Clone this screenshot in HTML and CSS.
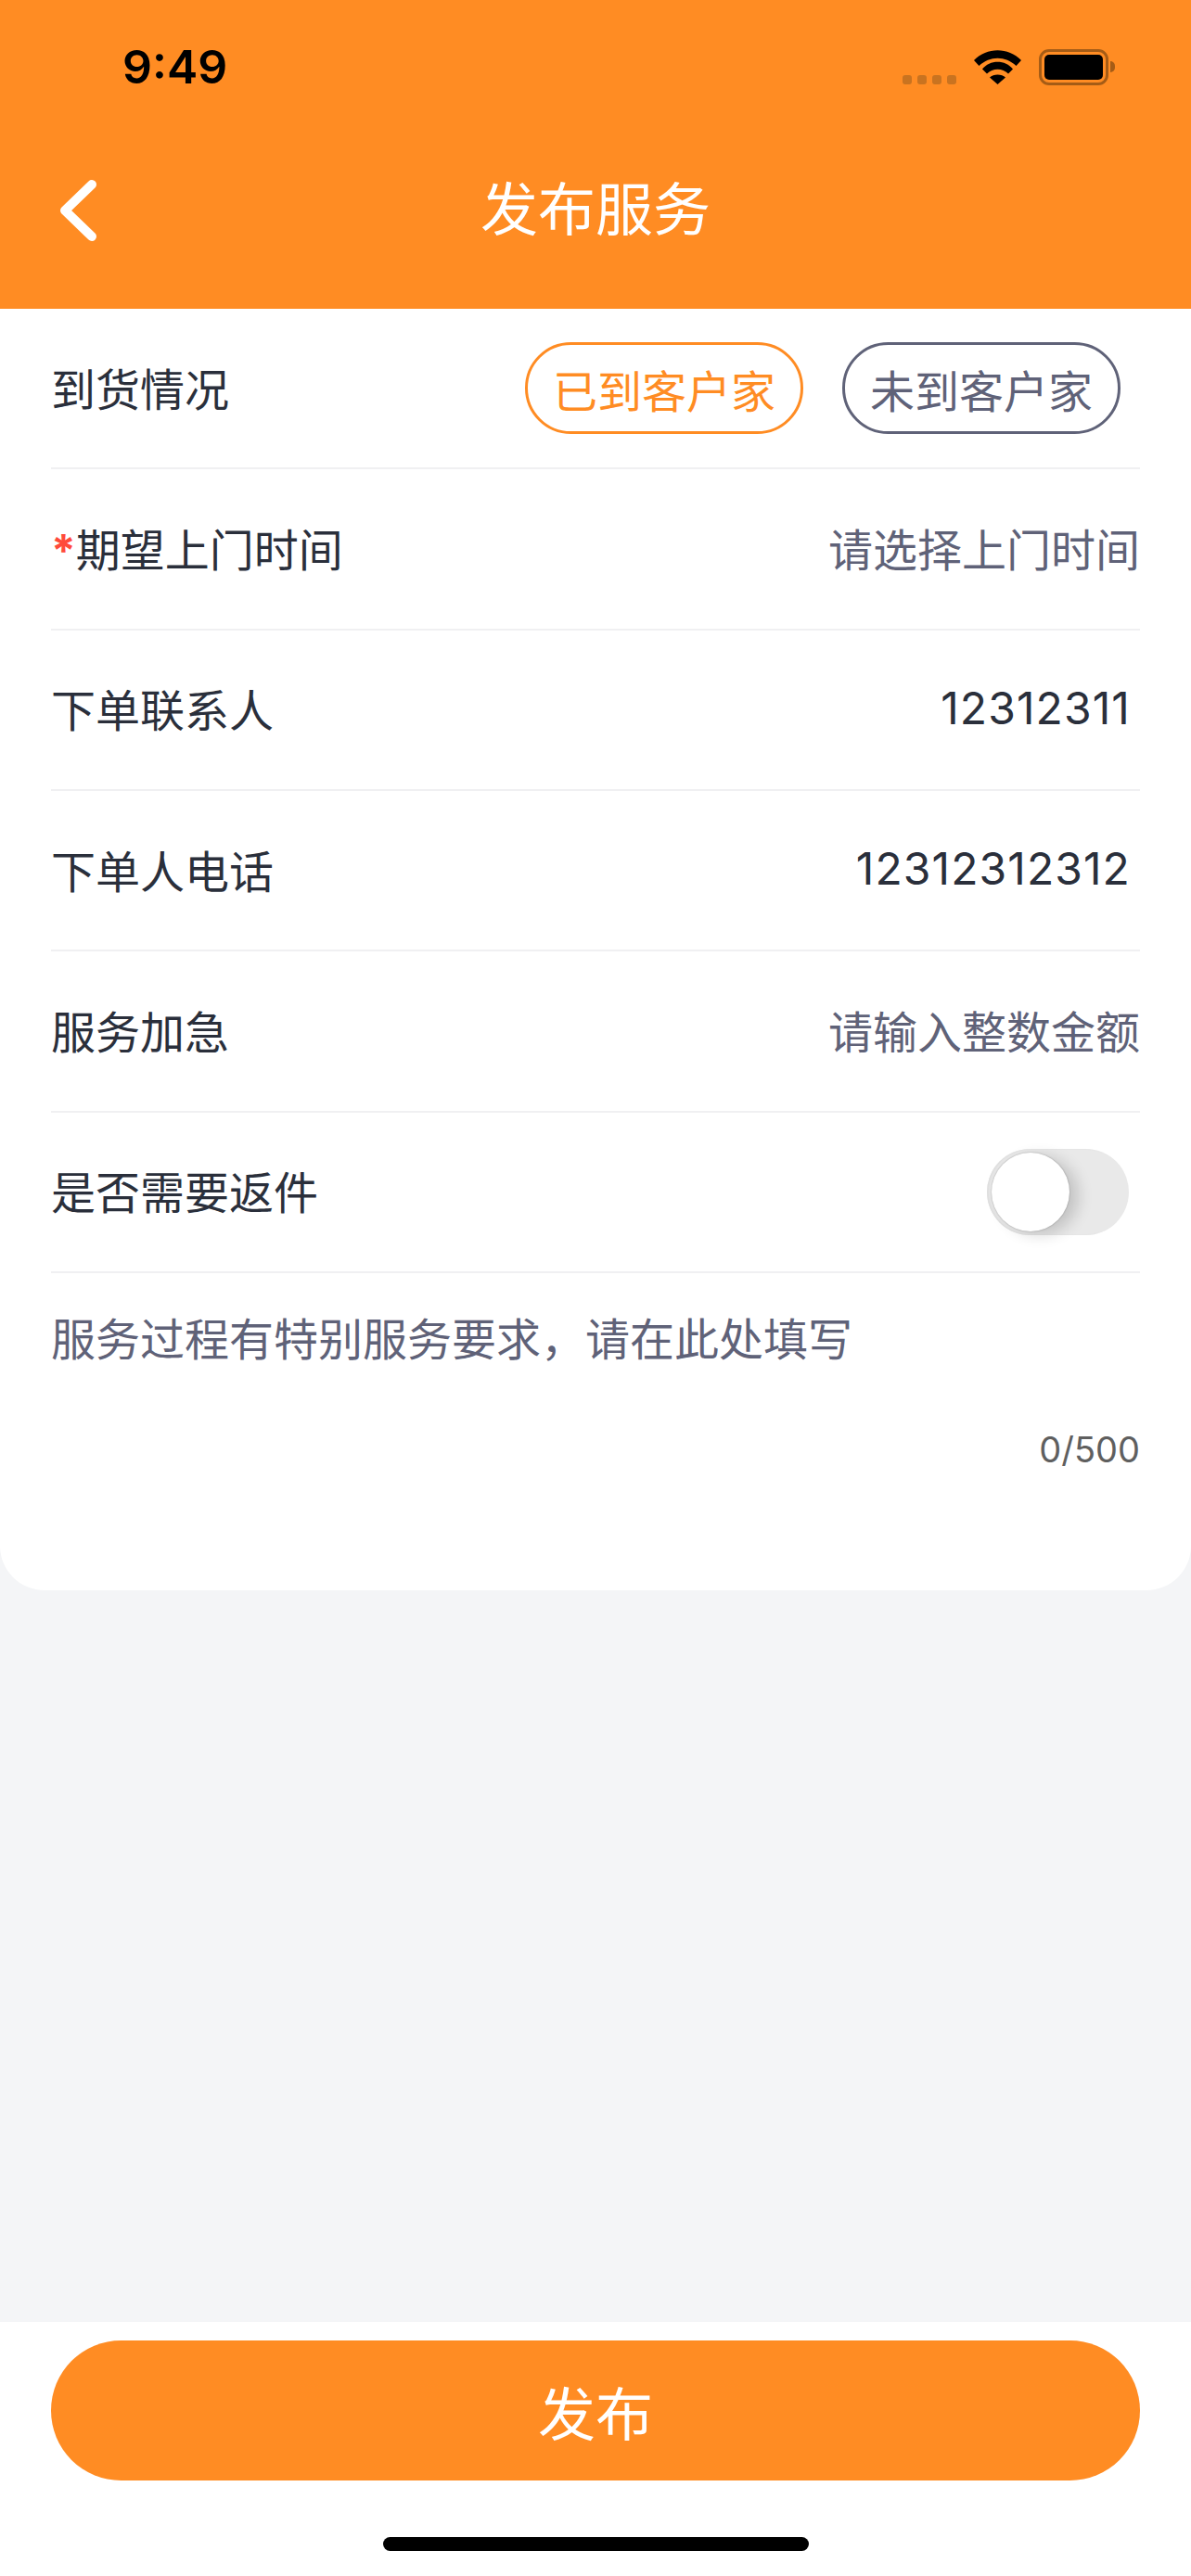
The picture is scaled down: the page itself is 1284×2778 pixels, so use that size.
FILE: index.html
```html
<!DOCTYPE html>
<html lang="zh-CN">
<head>
    <meta charset="UTF-8">
    <meta name="viewport" content="width=device-width, initial-scale=1.0">
    <title>发布服务</title>
    <link rel="stylesheet" href="styles.css">
</head>
<body>
    <div class="page">
        <header class="header">
            <div class="status-bar">
                <span class="time">9:49</span>
                <div class="status-icons">
                    <div class="signal"><i></i><i></i><i></i><i></i></div>
                    <svg class="wifi" width="51" height="37" viewBox="0 0 51 37">
                        <path d="M0 11 C14 -3.500 37 -3.500 51 11 L45.500 17 C34 6 17 6 5.500 17 Z"/>
                        <path d="M9 20.500 C17 10 34 10 42 20.500 L37 25.500 C31 19 20 19 14 25.500 Z"/>
                        <path d="M17 29.500 C21 25.500 30 25.500 34 29.500 L25.500 37 Z"/>
                    </svg>
                    <div class="battery"><div class="battery-fill"></div></div>
                    <div class="battery-cap"></div>
                </div>
            </div>
            <div class="nav-bar">
                <svg class="back" width="42" height="66" viewBox="0 0 42 66">
                    <path d="M34 5 L5 33 L34 61"/>
                </svg>
                <h1 class="title">发布服务</h1>
            </div>
        </header>

        <main class="card">
            <div class="row">
                <span class="label">到货情况</span>
                <div class="tags">
                    <span class="tag tag-active">已到客户家</span>
                    <span class="tag">未到客户家</span>
                </div>
            </div>
            <div class="row">
                <span class="label"><b class="required">*</b>期望上门时间</span>
                <span class="placeholder">请选择上门时间</span>
            </div>
            <div class="row">
                <span class="label">下单联系人</span>
                <span class="value">12312311</span>
            </div>
            <div class="row">
                <span class="label">下单人电话</span>
                <span class="value">12312312312</span>
            </div>
            <div class="row">
                <span class="label">服务加急</span>
                <span class="placeholder">请输入整数金额</span>
            </div>
            <div class="row">
                <span class="label">是否需要返件</span>
                <div class="switch"><div class="switch-knob"></div></div>
            </div>
            <div class="remark">
                <p class="remark-text">服务过程有特别服务要求，请在此处填写</p>
                <p class="count">0/500</p>
            </div>
        </main>

        <footer class="footer">
            <button class="submit" type="button">发布</button>
            <div class="home-bar"></div>
        </footer>
    </div>
</body>
</html>
```

FILE: styles.css
```css
* {
    box-sizing: border-box;
}

body {
    margin: 0;
    background: #f4f5f7;
    font-family: "Inter", "Noto Sans CJK SC", sans-serif;
}

.page {
    display: flex;
    flex-direction: column;
    height: 2778px;
}

/* header */
.header {
    height: 333px;
    background: #ff8c23;
}

.status-bar {
    height: 120px;
    padding: 47px 82px 0 132px;
    display: flex;
    justify-content: space-between;
}

.time {
    font-size: 50px;
    line-height: 50px;
    font-weight: 600;
    color: #000;
}

.status-icons {
    display: flex;
    align-items: flex-start;
}

.signal {
    display: flex;
    gap: 6px;
    margin: 34px 19px 0 0;
}

.signal i {
    width: 10px;
    height: 10px;
    border-radius: 3px;
    background: #c97320;
}

.wifi {
    margin: 7px 19px 0 0;
}

.wifi path {
    fill: #000;
}

.battery {
    width: 75px;
    height: 39px;
    margin-top: 6px;
    padding: 3px;
    border: 3px solid #a55c16;
    border-radius: 11px;
}

.battery-fill {
    height: 100%;
    background: #000;
    border-radius: 5px;
}

.battery-cap {
    width: 5px;
    height: 12px;
    margin: 19px 0 0 2px;
    background: #a55c16;
    border-radius: 0 6px 6px 0;
}

.nav-bar {
    height: 213px;
    display: flex;
    justify-content: center;
    align-items: flex-start;
    position: relative;
}

.back {
    position: absolute;
    left: 65px;
    top: 74px;
}

.back path {
    fill: none;
    stroke: #fff;
    stroke-width: 10;
    stroke-linecap: round;
    stroke-linejoin: round;
}

.title {
    margin: 69px 0 0;
    font-size: 62px;
    line-height: 76px;
    font-weight: 400;
    color: #fff;
}

/* form card */
.card {
    height: 1382px;
    padding: 0 55px;
    background: #fff;
    border-radius: 0 0 48px 48px;
}

.row {
    height: 173.33px;
    display: flex;
    justify-content: space-between;
    align-items: center;
    border-bottom: 2px solid #f0f0f2;
}

.label,
.placeholder,
.value {
    padding-bottom: 4px;
    font-size: 48px;
}

.label,
.value {
    color: #2a2f3b;
}

.required {
    color: #ff4a3a;
    font-weight: 700;
}

.placeholder {
    color: #5f6278;
}

.value {
    margin-right: 10px;
    letter-spacing: 1.100px;
}

.tags {
    display: flex;
    gap: 42px;
    margin-right: 21px;
}

.tag {
    width: 300px;
    height: 99px;
    display: flex;
    justify-content: center;
    align-items: center;
    border: 3px solid #5f6278;
    border-radius: 50px;
    font-size: 48px;
    color: #5f6278;
}

.tag-active {
    border-color: #ff8c23;
    color: #ff8c23;
}

.switch {
    width: 153px;
    height: 93px;
    margin-right: 12px;
    padding: 4px 5px;
    background: #e9e9e9;
    border-radius: 47px;
    box-shadow: inset 2px 0 2px #dedede;
}

.switch-knob {
    width: 84px;
    height: 85px;
    background: #fff;
    border-radius: 50%;
    box-shadow: 10px 4px 16px rgba(0, 0, 0, 0.16), 0 0 2px rgba(0, 0, 0, 0.3);
}

.remark {
    padding-top: 38px;
}

.remark-text {
    margin: 0;
    font-size: 48px;
    line-height: 68px;
    color: #5f6278;
}

.count {
    margin: 62px 0 0;
    text-align: right;
    font-size: 38px;
    line-height: 44px;
    color: #5f5f5f;
}

/* footer */
.footer {
    margin-top: auto;
    height: 274px;
    padding: 20px 55px 0;
    background: #fff;
    display: flex;
    flex-direction: column;
    align-items: center;
}

.submit {
    width: 100%;
    height: 151px;
    flex-shrink: 0;
    background: #ff8c23;
    border: none;
    border-radius: 76px;
    font-family: inherit;
    font-size: 62px;
    color: #fff;
}

.home-bar {
    width: 459px;
    height: 15px;
    margin-top: 61px;
    background: #000;
    border-radius: 8px;
}
```
